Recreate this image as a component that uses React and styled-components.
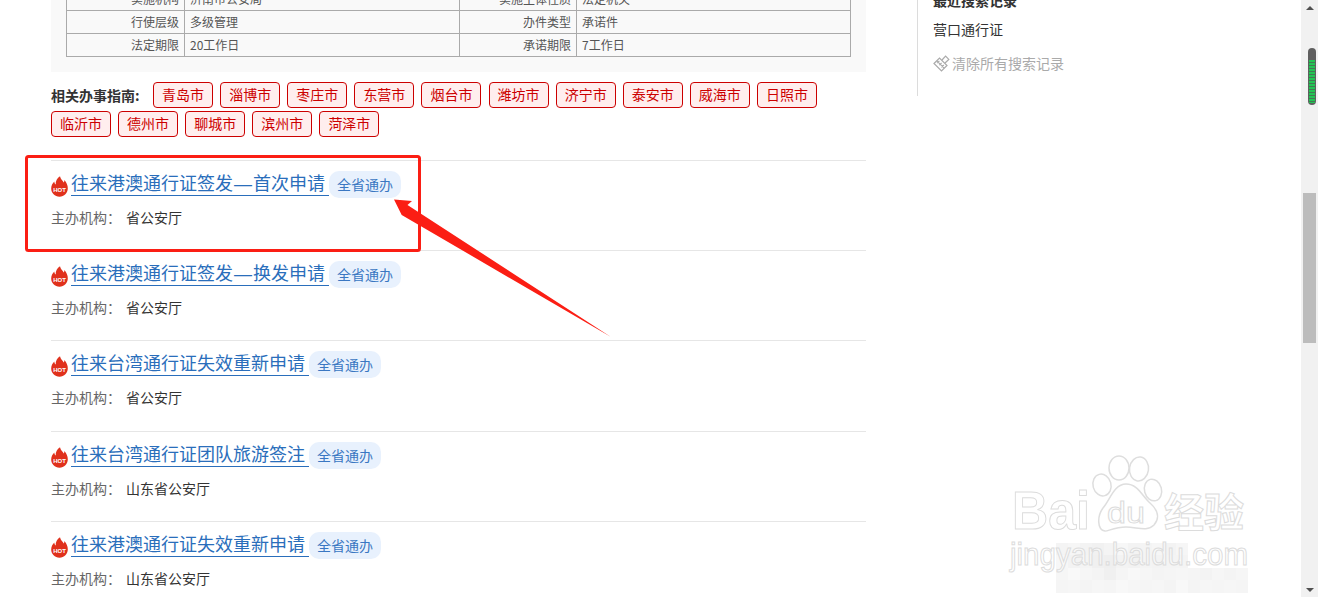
import React from 'react'
import styled, { createGlobalStyle } from 'styled-components'

const GlobalStyle = createGlobalStyle`
	html, body {
		margin: 0;
		padding: 0;
		height: 100%;
		overflow: hidden;
		background: #fff;
	}
	body {
		font-family: "Noto Sans CJK SC", "Liberation Sans", sans-serif;
		font-size: 14px;
		color: #333;
	}
`

const Page = styled.div`
	position: relative;
	display: flex;
	width: 1318px;
	height: 597px;
	overflow: hidden;
`

const Content = styled.div`
	flex: 1;
	display: flex;
	align-items: flex-start;
	padding-left: 51px;
`

const Main = styled.main`
	width: 815px;
	margin-top: -13px;
`

const InfoPanel = styled.section`
	background: #f9f9f9;
	padding: 0 15px 15px;
`

const InfoTable = styled.table`
	width: 784px;
	border-collapse: collapse;
	table-layout: fixed;
	font-size: 12px;
	color: #555;

	th, td {
		height: 22px;
		padding: 0 5px;
		border: 1px solid #aaa;
		font-weight: 400;
		line-height: 20px;
		overflow: hidden;
		white-space: nowrap;
	}
	th { text-align: right; }
	td { text-align: left; }
`

const GuideWrap = styled.div`
	display: flex;
	flex-wrap: wrap;
	gap: 3px 7.1px;
	margin-top: 10px;
`

const GuideLabel = styled.strong`
	width: 95px;
	height: 26px;
	line-height: 26px;
	font-size: 14px;
	font-weight: 700;
	color: #333;
	white-space: nowrap;
`

const CityTag = styled.a`
	box-sizing: border-box;
	width: 60px;
	height: 26px;
	line-height: 23px;
	text-align: center;
	font-size: 14px;
	color: #cc0000;
	background: #ffeeee;
	border: 1px solid #cc0000;
	border-radius: 4px;
`

const List = styled.ul`
	list-style: none;
	margin: 23px 0 0;
	padding: 0;
`

const Item = styled.li`
	box-sizing: border-box;
	height: 90.2px;
	border-top: 1px solid #e6e6e6;
	padding-top: 10px;
`

const TitleRow = styled.div`
	display: flex;
	align-items: flex-start;
	height: 27px;
`

const HotBadge = styled.svg`
	width: 17px;
	height: 21px;
	margin: 5px 3px 0 0;
	flex: none;
`

const TitleLink = styled.a`
	box-sizing: border-box;
	height: 25px;
	line-height: 23px;
	font-size: 18px;
	color: #2a6ebb;
	border-bottom: 1px solid #2a6ebb;
	padding-right: 4px;
	white-space: nowrap;
`

// the CJK face draws this dash short, the Latin one is a full em wide
const Dash = styled.span`
	font-family: "Liberation Sans", sans-serif;
	padding: 0 1px;
`

const Scope = styled.span`
	width: 72px;
	height: 27px;
	line-height: 26px;
	text-align: center;
	font-size: 14px;
	color: #3a77c2;
	background: #e8f1fd;
	border-radius: 10px;
`

const Meta = styled.p`
	display: flex;
	margin: 9px 0 0;
	height: 20px;
	line-height: 20px;
	font-size: 14px;
	color: #333;

	span {
		width: 75px;
		color: #666;
	}
`

const Side = styled.aside`
	box-sizing: border-box;
	width: 200px;
	height: 96px;
	margin-left: 51px;
	padding-left: 15px;
	border-left: 1px solid #dcdcdc;
`

const SideTitle = styled.h4`
	margin: -10px 0 0;
	height: 20px;
	line-height: 20px;
	font-size: 14px;
	font-weight: 700;
	color: #333;
	white-space: nowrap;
`

const SearchEntry = styled.div`
	margin-top: 9px;
	height: 20px;
	line-height: 20px;
	font-size: 14px;
	color: #333;
`

const ClearLink = styled.a`
	display: flex;
	align-items: center;
	gap: 2px;
	margin-top: 14px;
	height: 20px;
	line-height: 20px;
	font-size: 14px;
	color: #aaa;
	white-space: nowrap;
`

const ScrollTrack = styled.div`
	position: relative;
	flex: none;
	width: 17px;
	background: #f1f1f1;
`

const ScrollArrow = styled.i`
	position: absolute;
	left: 5px;
	${p => (p.$down ? 'bottom: 5px;' : 'top: 6px;')}
	width: 0;
	height: 0;
	border-left: 4px solid transparent;
	border-right: 4px solid transparent;
	${p => (p.$down ? 'border-top: 4px solid #505050;' : 'border-bottom: 4px solid #505050;')}
`

const ScrollThumb = styled.div`
	position: absolute;
	left: 2px;
	top: 193px;
	width: 13px;
	height: 150px;
	background: #bcbcbc;
`

const LevelMeter = styled.div`
	position: absolute;
	left: 7px;
	top: 48px;
	box-sizing: border-box;
	width: 8px;
	height: 57px;
	padding: 12px 1px 2px;
	background: #5f5f5f;
	border-radius: 4px;

	&::before {
		content: '';
		display: block;
		height: 100%;
		background: repeating-linear-gradient(to bottom, #22c453 0 2px, #3f7a52 2px 3px);
	}
`

const Annotation = styled.svg`
	position: absolute;
	left: 0;
	top: 0;
	pointer-events: none;
`

const Watermark = styled.svg`
	position: absolute;
	left: 1000px;
	top: 440px;
	pointer-events: none;
`

const table = [
	['实施机构', '济南市公安局', '实施主体性质', '法定机关'],
	['行使层级', '多级管理', '办件类型', '承诺件'],
	['法定期限', '20工作日', '承诺期限', '7工作日'],
]

const cities = ['青岛市', '淄博市', '枣庄市', '东营市', '烟台市', '潍坊市', '济宁市', '泰安市', '威海市', '日照市', '临沂市', '德州市', '聊城市', '滨州市', '菏泽市']

const items = [
	{ title: '往来港澳通行证签发—首次申请', org: '省公安厅' },
	{ title: '往来港澳通行证签发—换发申请', org: '省公安厅' },
	{ title: '往来台湾通行证失效重新申请', org: '省公安厅' },
	{ title: '往来台湾通行证团队旅游签注', org: '山东省公安厅' },
	{ title: '往来港澳通行证失效重新申请', org: '山东省公安厅' },
]

// blurred patch over the watermark: x, y, grey level
const mosaic = [
	[56, 103, 244], [68, 103, 246], [80, 103, 243], [92, 103, 241], [104, 103, 244], [116, 103, 247], [128, 103, 243], [140, 103, 244], [152, 103, 246], [164, 103, 243], [176, 103, 246],
	[56, 115, 247], [68, 115, 243], [80, 115, 244], [92, 115, 240], [104, 115, 239], [116, 115, 243], [128, 115, 242], [140, 115, 244], [152, 115, 243], [164, 115, 244], [176, 115, 244],
	[56, 128, 246], [68, 128, 249], [80, 128, 246], [92, 128, 244], [104, 128, 240], [116, 128, 245], [128, 128, 248], [140, 128, 246], [152, 128, 244], [164, 128, 245], [176, 128, 246], [188, 128, 245], [200, 128, 243], [212, 128, 246], [224, 128, 244], [236, 128, 246],
	[56, 140, 245], [68, 140, 246], [80, 140, 244], [92, 140, 246], [104, 140, 245], [116, 140, 248], [128, 140, 246], [140, 140, 245], [152, 140, 246], [164, 140, 244], [176, 140, 248], [188, 140, 244], [200, 140, 246], [212, 140, 245], [224, 140, 246], [236, 140, 245],
]

const Flame = () => (
	<HotBadge viewBox="0 0 17 21">
		<path d="M9 0.3C9.6 3.2 11.6 4.4 12.7 6.6C13.3 5.8 13.4 5 13.2 3.9C15.6 6.2 16.8 9.2 16.8 12.3C16.8 17 13.1 20.7 8.5 20.7C3.9 20.7 0.2 17 0.2 12.5C0.2 9.6 1.5 7.4 3.3 5.5C3.4 6.8 3.8 7.8 4.7 8.5C4.4 5 6.2 2.2 9 0.3Z" fill="#e0311c" />
		<text x="8.5" y="15.5" textAnchor="middle" fontFamily="Liberation Sans, sans-serif" fontSize="6" fontWeight="700" fill="#fff">HOT</text>
	</HotBadge>
)

const Broom = () => (
	<svg width="17" height="17" viewBox="0 0 17 17" fill="none" stroke="#aaa" strokeWidth="1.2">
		<path d="M1 8.5L6.5 3L14 10.5L8.5 16Z" />
		<path d="M3.8 5.8L11.2 13.2M6.2 10.2L8.6 7.8M8.4 12.4L10.8 10M4 8.2L6.4 5.8" />
		<path d="M9 5L12.6 1.2L15.8 4.4L12 8" />
	</svg>
)

const renderTitle = title => {
	const parts = title.split('—')
	if (parts.length === 1) return title
	return <>{parts[0]}<Dash>—</Dash>{parts[1]}</>
}

export default function App() {
	return (
		<Page lang="zh-CN">
			<GlobalStyle />
			<Content>
				<Main>
					<InfoPanel>
						<InfoTable>
							<colgroup>
								<col style={{ width: 118 }} />
								<col style={{ width: 275 }} />
								<col style={{ width: 117 }} />
								<col style={{ width: 274 }} />
							</colgroup>
							<tbody>
								{table.map(row => (
									<tr key={row[0]}>
										<th>{row[0]}</th>
										<td>{row[1]}</td>
										<th>{row[2]}</th>
										<td>{row[3]}</td>
									</tr>
								))}
							</tbody>
						</InfoTable>
					</InfoPanel>

					<GuideWrap>
						<GuideLabel>相关办事指南:</GuideLabel>
						{cities.map(city => <CityTag key={city}>{city}</CityTag>)}
					</GuideWrap>

					<List>
						{items.map(item => (
							<Item key={item.title}>
								<TitleRow>
									<Flame />
									<TitleLink>{renderTitle(item.title)}</TitleLink>
									<Scope>全省通办</Scope>
								</TitleRow>
								<Meta><span>主办机构：</span>{item.org}</Meta>
							</Item>
						))}
					</List>
				</Main>

				<Side>
					<SideTitle>最近搜索记录</SideTitle>
					<SearchEntry>营口通行证</SearchEntry>
					<ClearLink><Broom />清除所有搜索记录</ClearLink>
				</Side>
			</Content>

			<ScrollTrack>
				<ScrollArrow />
				<LevelMeter />
				<ScrollThumb />
				<ScrollArrow $down />
			</ScrollTrack>

			<Watermark width="270" height="157" viewBox="0 0 270 157">
				{mosaic.map(([x, y, g]) => <rect key={x + '-' + y} x={x} y={y} width="12" height="13" fill={`rgb(${g},${g},${g})`} />)}
				<g fill="none" stroke="#dedede" strokeWidth="1.5">
					<ellipse cx="119" cy="28" rx="10" ry="12" />
					<ellipse cx="139" cy="29" rx="9.5" ry="12" transform="rotate(8 139 29)" />
					<ellipse cx="102" cy="45" rx="9" ry="11" transform="rotate(-15 102 45)" />
					<ellipse cx="153" cy="50" rx="8.5" ry="11" transform="rotate(-15 153 50)" />
					<path d="M126 44C138 44 142 56 150 63C158 70 160 78 154 85C147 92 137 87 126 87C115 87 106 92 105 91C97 90 97 76 103 68C110 60 114 44 126 44Z" />
				</g>
				<g fontFamily="Liberation Sans, sans-serif" fill="#fff" stroke="#dcdcdc" strokeWidth="1">
					<text x="12" y="89" fontSize="54" fontWeight="700" textLength="78" lengthAdjust="spacingAndGlyphs">Bai</text>
					<text x="107" y="83" fontSize="30" textLength="38" lengthAdjust="spacingAndGlyphs">du</text>
					<text x="10" y="125" fontSize="31" textLength="238" lengthAdjust="spacingAndGlyphs" fillOpacity="0.4">jingyan.baidu.com</text>
				</g>
				<text x="164" y="87" fontFamily="Noto Sans CJK SC, sans-serif" fontSize="40" fontWeight="700" fill="#fff" stroke="#dcdcdc" strokeWidth="1">经验</text>
			</Watermark>

			<Annotation width="1318" height="597" viewBox="0 0 1318 597">
				<rect x="26.5" y="156.5" width="393" height="94" rx="2" fill="none" stroke="#fb1e14" strokeWidth="3" />
				<polygon points="394,199.5 412,201 407.5,205 611,337 401.7,215" fill="#fb1e14" />
			</Annotation>
		</Page>
	)
}
